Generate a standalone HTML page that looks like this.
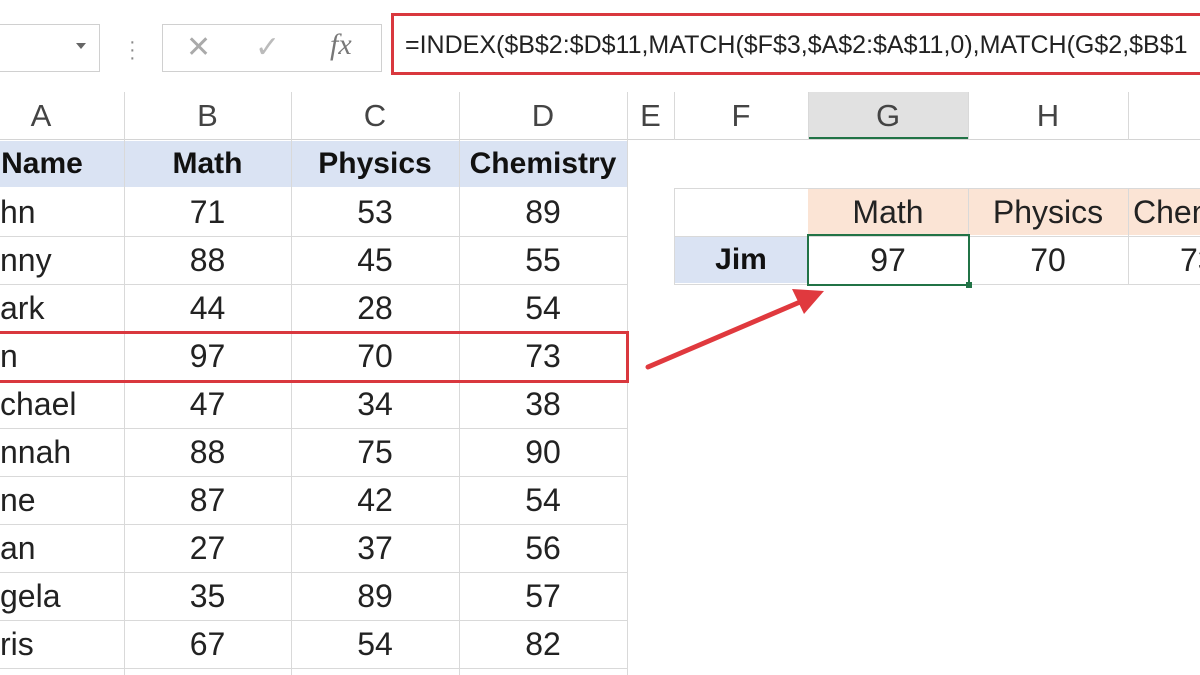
<!DOCTYPE html>
<html><head><style>
html,body{margin:0;width:1200px;height:675px;overflow:hidden}
body{background:#fff;font-family:"Liberation Sans",sans-serif;position:relative}
.a{position:absolute}
.c{position:absolute;display:flex;align-items:center;justify-content:center;font-size:32px;color:#222;box-sizing:border-box;white-space:nowrap}
.h{color:#444;font-size:31px}
.b{font-weight:bold;color:#111;font-size:30px}
.clip{position:absolute;overflow:hidden}
</style></head><body>
<div class="a" style="left:-2px;top:24px;width:100px;height:46px;border:1px solid #d0d0d0"></div>
<div class="a" style="left:76px;top:43px;width:0;height:0;border-left:5px solid transparent;border-right:5px solid transparent;border-top:6px solid #666"></div>
<div class="a" style="left:129px;top:38px;color:#888;font-size:20px;line-height:8px">·<br>·<br>·</div>
<div class="a" style="left:162px;top:24px;width:218px;height:46px;border:1px solid #d0d0d0"></div>
<div class="a" style="left:186px;top:30px;color:#aaa;font-size:30px">✕</div>
<div class="a" style="left:255px;top:30px;color:#bbb;font-size:30px">✓</div>
<div class="a" style="left:330px;top:28px;color:#777;font-size:30px;font-style:italic;font-family:'Liberation Serif',serif">fx</div>
<div class="a" style="left:391px;top:13px;width:809px;height:62px;border:3px solid #d9383e;border-right:none;box-sizing:border-box"></div>
<div class="clip" style="left:405px;top:25px;width:795px;height:40px"><div style="font-size:25px;color:#222;white-space:nowrap;line-height:40px">=INDEX($B$2:$D$11,MATCH($F$3,$A$2:$A$11,0),MATCH(G$2,$B$1</div></div>
<div class="a" style="left:0;top:92px;width:1200px;height:48px;border-bottom:1px solid #d4d4d4;box-sizing:border-box"></div>
<div class="a" style="left:808px;top:92px;width:160px;height:47px;background:#e1e1e1;border-bottom:2px solid #217346;box-sizing:border-box"></div>
<div class="c h" style="left:0;top:92px;width:82px;height:48px">A</div>
<div class="c h" style="left:124px;top:92px;width:167px;height:48px">B</div>
<div class="c h" style="left:291px;top:92px;width:168px;height:48px">C</div>
<div class="c h" style="left:459px;top:92px;width:168px;height:48px">D</div>
<div class="c h" style="left:627px;top:92px;width:47px;height:48px">E</div>
<div class="c h" style="left:674px;top:92px;width:134px;height:48px">F</div>
<div class="c h" style="left:808px;top:92px;width:160px;height:48px">G</div>
<div class="c h" style="left:968px;top:92px;width:160px;height:48px">H</div>
<div class="a" style="left:0;top:141px;width:627px;height:46px;background:#dae3f3"></div>
<div class="a" style="left:808px;top:189px;width:392px;height:46px;background:#fbe4d5"></div>
<div class="a" style="left:675px;top:237px;width:133px;height:46px;background:#dae3f3"></div>
<svg class="a" style="left:0;top:92px" width="1200" height="583">
<g stroke="#d9d9d9" stroke-width="1">
<line x1="124.5" y1="0" x2="124.5" y2="583"/><line x1="291.5" y1="0" x2="291.5" y2="583"/><line x1="459.5" y1="0" x2="459.5" y2="583"/><line x1="627.5" y1="0" x2="627.5" y2="583"/>
<line x1="674.5" y1="0" x2="674.5" y2="48"/><line x1="808.5" y1="0" x2="808.5" y2="48"/><line x1="968.5" y1="0" x2="968.5" y2="48"/><line x1="1128.5" y1="0" x2="1128.5" y2="48"/>
<line x1="0" y1="144.5" x2="627" y2="144.5"/><line x1="0" y1="192.5" x2="627" y2="192.5"/><line x1="0" y1="240.5" x2="627" y2="240.5"/><line x1="0" y1="288.5" x2="627" y2="288.5"/><line x1="0" y1="336.5" x2="627" y2="336.5"/><line x1="0" y1="384.5" x2="627" y2="384.5"/><line x1="0" y1="432.5" x2="627" y2="432.5"/><line x1="0" y1="480.5" x2="627" y2="480.5"/><line x1="0" y1="528.5" x2="627" y2="528.5"/><line x1="0" y1="576.5" x2="627" y2="576.5"/>
<line x1="674" y1="96.5" x2="1200" y2="96.5"/><line x1="674" y1="144.5" x2="1200" y2="144.5"/><line x1="674" y1="192.5" x2="1200" y2="192.5"/>
<line x1="674.5" y1="96" x2="674.5" y2="192"/><line x1="968.5" y1="96" x2="968.5" y2="192"/><line x1="1128.5" y1="96" x2="1128.5" y2="192"/>
</g>
</svg>
<div id="t"></div>
<div class="c b" style="left:0;top:140px;width:84px;height:48px">Name</div>
<div class="c b" style="left:124px;top:140px;width:167px;height:48px">Math</div>
<div class="c b" style="left:291px;top:140px;width:168px;height:48px">Physics</div>
<div class="c b" style="left:459px;top:140px;width:168px;height:48px">Chemistry</div>
<script>
var d=[["hn",71,53,89],["nny",88,45,55],["ark",44,28,54],["n",97,70,73],["chael",47,34,38],["nnah",88,75,90],["ne",87,42,54],["an",27,37,56],["gela",35,89,57],["ris",67,54,82]];
var x=[[124,167],[291,168],[459,168]],h="";
d.forEach(function(r,i){var y=188+48*i;h+='<div class="c" style="left:0;top:'+y+'px;height:48px;justify-content:flex-start">'+r[0]+'</div>';
for(var j=0;j<3;j++)h+='<div class="c" style="left:'+x[j][0]+'px;top:'+y+'px;width:'+x[j][1]+'px;height:48px">'+r[j+1]+'</div>';});
document.getElementById('t').innerHTML=h;
</script>
<div class="c" style="left:808px;top:188px;width:160px;height:48px">Math</div>
<div class="c" style="left:968px;top:188px;width:160px;height:48px">Physics</div>
<div class="clip" style="left:1128px;top:188px;width:72px;height:96px">
<div class="c" style="left:5px;top:0;height:48px">Chemistry</div>
<div class="c" style="left:52px;top:48px;height:48px">73</div>
</div>
<div class="c b" style="left:674px;top:236px;width:134px;height:48px">Jim</div>
<div class="c" style="left:808px;top:236px;width:160px;height:48px">97</div>
<div class="c" style="left:968px;top:236px;width:160px;height:48px">70</div>
<div class="a" style="left:807px;top:234px;width:163px;height:52px;border:2px solid #217346;box-sizing:border-box"></div>
<div class="a" style="left:966px;top:282px;width:6px;height:6px;background:#217346"></div>
<div class="a" style="left:0;top:331px;width:629px;height:52px;border:3px solid #d9383e;border-left:none;box-sizing:border-box"></div>
<svg class="a" style="left:0;top:0" width="1200" height="675">
<line x1="648" y1="367" x2="800" y2="302" stroke="#e0393e" stroke-width="5" stroke-linecap="round"/>
<polygon points="824,291 792,289 804,314" fill="#e0393e"/>
</svg>
</body></html>
